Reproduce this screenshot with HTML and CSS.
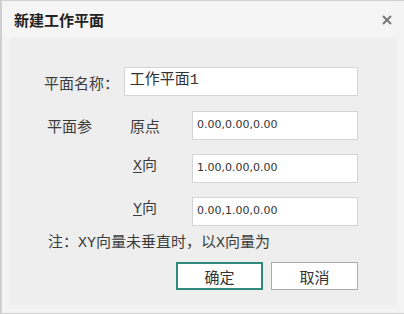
FILE: index.html
```html
<!DOCTYPE html>
<html lang="zh-CN">
<head>
  <meta charset="UTF-8" />
  <title>新建工作平面</title>
  <link rel="stylesheet" href="styles.css">
</head>
<body>

  <div class="dialog">
    <div class="dialog-header">
      <h1>新建工作平面</h1>
      <button class="close-btn" type="button">
        <svg width="10" height="10" viewBox="0 0 10 10">
          <path d="M1 1 L9 9 M9 1 L1 9" stroke="#787878" stroke-width="2" fill="none" />
        </svg>
      </button>
    </div>

    <div class="panel">
      <!-- plane name -->
      <div class="row-name">
        <label for="planeName">平面名称：</label>
        <div class="field field-name" id="planeName">工作平面1</div>
      </div>

      <!-- plane params -->
      <div class="params">
        <span class="group-label">平面参</span>
        <span class="sub-label">原点</span>
        <div class="field field-num">0.00,0.00,0.00</div>

        <span></span>
        <span class="sub-label axis"><u>X</u>向</span>
        <div class="field field-num">1.00,0.00,0.00</div>

        <span></span>
        <span class="sub-label axis"><u>Y</u>向</span>
        <div class="field field-num">0.00,1.00,0.00</div>
      </div>

      <p class="note">注：XY向量未垂直时，以X向量为</p>

      <div class="actions">
        <button type="button" class="btn btn-ok">确定</button>
        <button type="button" class="btn">取消</button>
      </div>
    </div>
  </div>

</body>
</html>
```

FILE: styles.css
```css
body {
  margin: 0;
  padding: 0;
  background: #f3f3f3;
  font-family: "Liberation Mono", "Noto Sans CJK SC", monospace;
  color: #3c3c3c;
  overflow: hidden;
}

.dialog {
  width: 420px;
  height: 312px;
  background: #f3f3f3;
  border-top: 1px solid #d0d0d0;
  border-left: 2px solid #cfcfcf;
  border-bottom: 2px solid #cfcfcf;
}

.dialog-header {
  height: 37px;
  background: #f5f5f5;
  display: flex;
  align-items: center;
  justify-content: space-between;
  padding: 0 0 0 12px;
  width: 378px;
}

.dialog-header h1 {
  margin: 0;
  font-family: "Noto Sans CJK SC", sans-serif;
  font-size: 15px;
  font-weight: bold;
  color: #222;
  line-height: 20px;
}

.close-btn {
  background: transparent;
  border: none;
  padding: 0;
  width: 10px;
  height: 10px;
  display: flex;
  cursor: pointer;
}

.panel {
  width: 387px;
  height: 267px;
  margin-left: 8px;
  background: #eeeeee;
  box-sizing: border-box;
  padding: 29px 39px 0 34px;
}

.row-name {
  display: flex;
  align-items: center;
  height: 29px;
}

.row-name label {
  width: 80px;
  font-size: 15px;
  font-family: "Noto Sans CJK SC", sans-serif;
  padding-top: 1px;
}

.field {
  box-sizing: border-box;
  height: 29px;
  background: #fff;
  border: 1px solid #d4d4d4;
  color: #333;
}

.field-name {
  width: 235px;
  font-size: 15px;
  line-height: 20px;
  padding: 3px 5px;
}

.field-num {
  width: 166px;
  font-family: "DejaVu Sans", sans-serif;
  font-size: 11px;
  line-height: 16px;
  padding: 5px 4px;
}

.params {
  display: grid;
  grid-template-columns: 86px 62px 166px;
  grid-auto-rows: 29px;
  row-gap: 14px;
  margin-top: 15px;
  align-items: center;
}

.group-label {
  font-family: "Noto Sans CJK SC", sans-serif;
  font-size: 15px;
  padding-left: 3px;
}

.sub-label {
  font-family: "Noto Sans CJK SC", sans-serif;
  font-size: 15px;
}

.sub-label.axis {
  font-family: "Liberation Mono", "Noto Sans CJK SC", monospace;
  align-self: start;
  line-height: 20px;
  padding: 3px 0 0 3px;
}

.sub-label u {
  text-underline-offset: 2px;
}

.note {
  margin: 8px 0 0 4px;
  font-size: 15px;
  line-height: 20px;
}

.actions {
  display: flex;
  justify-content: flex-end;
  gap: 8px;
  margin-top: 8px;
}

.btn {
  width: 87px;
  height: 28px;
  box-sizing: border-box;
  background: #fff;
  border: 1px solid #ababab;
  font-family: "Noto Sans CJK SC", sans-serif;
  font-size: 15px;
  color: #333;
  padding: 0;
  cursor: pointer;
}

.btn-ok {
  border: 2px solid #2f8a7b;
}
```
